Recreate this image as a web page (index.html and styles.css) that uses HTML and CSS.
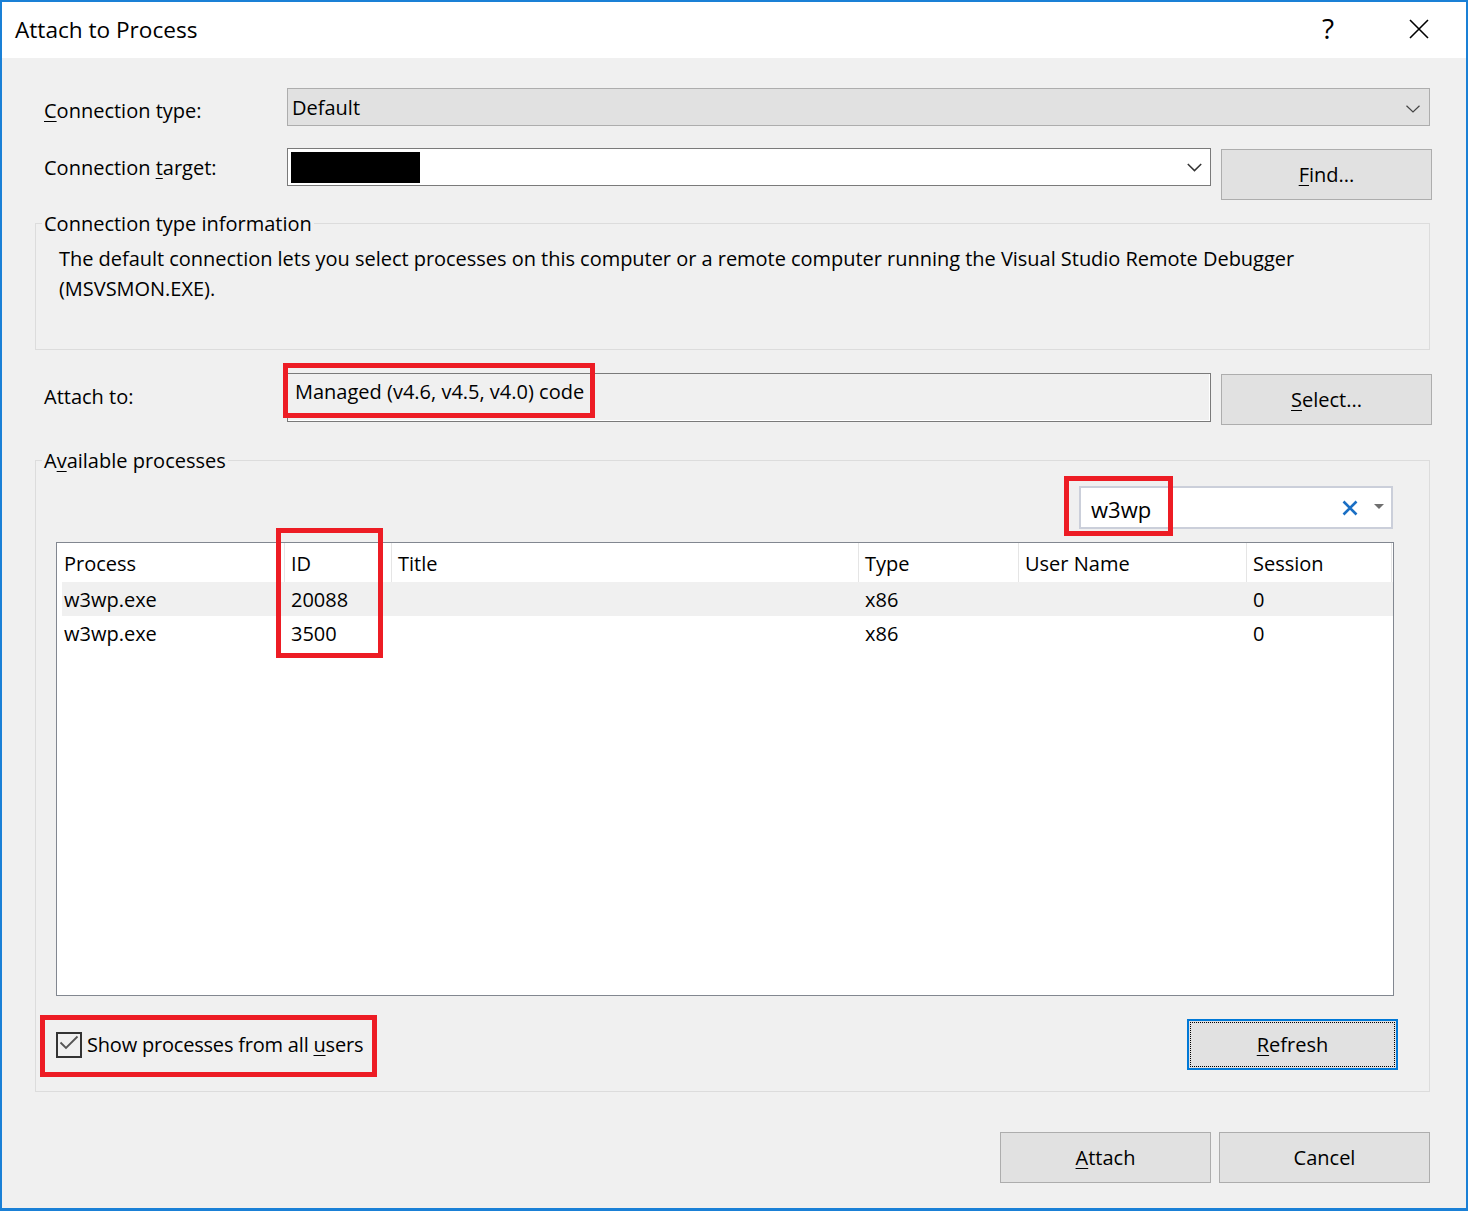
FILE: index.html
```html
<!DOCTYPE html>
<html lang="en">
<head>
<meta charset="utf-8">
<title>Attach to Process</title>
<link rel="stylesheet" href="styles.css">
</head>
<body>
<div class="window">
  <div class="titlebar">
    <span class="title">Attach to Process</span>
    <span class="help">?</span>
    <svg class="close" width="20" height="20" viewBox="0 0 20 20"><path d="M1 1L19 19M19 1L1 19" stroke="#000" stroke-width="1.6" fill="none"/></svg>
  </div>
  <div class="content">
    <div class="row row-type">
      <label class="lbl"><u>C</u>onnection type:</label>
      <div class="select">
        <span>Default</span>
        <svg class="chev" width="14" height="8" viewBox="0 0 14 8"><path d="M0.5 0.8L7 7L13.5 0.8" stroke="#444" stroke-width="1.2" fill="none"/></svg>
      </div>
    </div>
    <div class="row row-target">
      <label class="lbl">Connection <u>t</u>arget:</label>
      <div class="combo">
        <span class="redact"></span>
        <svg class="chev" width="15" height="9" viewBox="0 0 15 9"><path d="M0.8 1L7.5 7.6L14.2 1" stroke="#333" stroke-width="1.5" fill="none"/></svg>
      </div>
      <button class="btn"><u>F</u>ind...</button>
    </div>
    <div class="group info-group">
      <div class="group-title">Connection type information</div>
      <p class="info">The default connection lets you select processes on this computer or a remote computer running the Visual Studio Remote Debugger<br>(MSVSMON.EXE).</p>
    </div>
    <div class="row row-attach">
      <label class="lbl">Attach to:</label>
      <div class="readonly">
        <span>Managed (v4.6, v4.5, v4.0) code</span>
        <span class="mark mark-managed"></span>
      </div>
      <button class="btn"><u>S</u>elect...</button>
    </div>
    <div class="group procs">
      <div class="group-title">A<u>v</u>ailable processes</div>
      <div class="search">
        <span class="search-text">w3wp</span>
        <svg class="search-x" width="16" height="16" viewBox="0 0 16 16"><path d="M1.5 1.5L14.5 14.5M14.5 1.5L1.5 14.5" stroke="#1a6fc4" stroke-width="2.6" fill="none"/></svg>
        <svg class="search-drop" width="10" height="5" viewBox="0 0 10 5"><path d="M0 0H10L5 5Z" fill="#6f6f6f"/></svg>
        <span class="mark mark-search"></span>
      </div>
      <div class="table">
        <div class="thead">
          <div class="th">Process</div>
          <div class="th">ID</div>
          <div class="th">Title</div>
          <div class="th">Type</div>
          <div class="th">User Name</div>
          <div class="th">Session</div>
        </div>
        <div class="tr sel">
          <div class="td">w3wp.exe</div>
          <div class="td">20088</div>
          <div class="td"></div>
          <div class="td">x86</div>
          <div class="td"></div>
          <div class="td">0</div>
        </div>
        <div class="tr">
          <div class="td">w3wp.exe</div>
          <div class="td">3500</div>
          <div class="td"></div>
          <div class="td">x86</div>
          <div class="td"></div>
          <div class="td">0</div>
        </div>
        <span class="mark mark-id"></span>
      </div>
      <div class="bottom-row">
        <label class="check">
          <span class="box"><svg width="22" height="22" viewBox="0 0 22 22"><path d="M2.5 8.5L8 14L19.5 2.5" stroke="#555" stroke-width="1.8" fill="none"/></svg></span>
          <span class="check-text">Show processes from all <u>u</u>sers</span>
        </label>
        <button class="btn focus"><u>R</u>efresh</button>
        <span class="mark mark-check"></span>
      </div>
    </div>
    <div class="footer">
      <button class="btn"><u>A</u>ttach</button>
      <button class="btn">Cancel</button>
    </div>
  </div>
</div>
</body>
</html>
```

FILE: styles.css
```css
* {
  box-sizing: border-box;
}

body {
  margin: 0;
  font-family: "Open Sans", "Segoe UI", sans-serif;
  font-size: 20px;
  color: #000;
  background: #fff;
}

u {
  text-decoration-thickness: 1px;
  text-underline-offset: 3px;
}

.window {
  width: 1468px;
  height: 1211px;
  border: 2px solid #1a80d6;
  border-bottom-width: 3px;
  background: #f0f0f0;
  display: flex;
  flex-direction: column;
}

/* title bar */
.titlebar {
  height: 56px;
  flex: none;
  background: #fff;
  display: flex;
  align-items: flex-start;
  padding-left: 13px;
}

.title {
  font-size: 22.6px;
  line-height: 56px;
}

.help {
  margin-left: auto;
  font-size: 28px;
  line-height: 52px;
}

.close {
  margin: 17px 37px 0 75px;
}

/* content */
.content {
  padding: 30px 36px 0 33px;
  display: flex;
  flex-direction: column;
}

.row {
  display: flex;
  align-items: flex-start;
  padding-left: 9px;
}

.lbl {
  width: 243px;
  flex: none;
  line-height: 30px;
}

.row-type .lbl { padding-top: 8px; }
.row-target { margin-top: 22px; gap: 10px; }
.row-target .lbl { padding-top: 5px; margin-right: -10px; }
.row-attach { margin-top: 23px; gap: 10px; }
.row-attach .lbl { padding-top: 9px; margin-right: -10px; }

.select {
  flex: 1;
  height: 38px;
  background: #e1e1e1;
  border: 1px solid #adadad;
  display: flex;
  align-items: flex-start;
  padding: 4px 9px 0 4px;
  line-height: 30px;
}

.chev {
  margin-left: auto;
  align-self: center;
}

.combo {
  flex: 1;
  height: 38px;
  background: #fff;
  border: 1px solid #7a7a7a;
  display: flex;
  align-items: center;
  padding: 0 8px 0 3px;
}

.redact {
  width: 129px;
  height: 31px;
  background: #000;
}

.btn {
  flex: none;
  width: 211px;
  height: 51px;
  background: #e1e1e1;
  border: 1px solid #adadad;
  font: inherit;
  color: #000;
  line-height: 49px;
  padding: 0;
  text-align: center;
}

.row-target .btn,
.row-attach .btn {
  margin-top: 1px;
  margin-right: -2px;
}

.readonly {
  flex: 1;
  height: 49px;
  border: 1px solid #7a7a7a;
  box-shadow: inset -1px -1px 0 #fff;
  position: relative;
  line-height: 30px;
  padding: 3px 0 0 7px;
}

/* group boxes */
.group {
  border: 1px solid #dcdcdc;
  display: flex;
  flex-direction: column;
  align-items: flex-start;
}

.group-title {
  margin: -15px 0 0 6px;
  padding: 0 2px;
  background: #f0f0f0;
  line-height: 30px;
}

.info-group {
  margin-top: 23px;
  padding-bottom: 45px;
}

.info {
  margin: 5px 0 0 23px;
  line-height: 30px;
  white-space: nowrap;
  letter-spacing: -0.03px;
}

.procs {
  margin-top: 35px;
  padding-bottom: 21px;
  align-items: stretch;
}

.procs .group-title {
  align-self: flex-start;
}

.search {
  align-self: flex-end;
  margin: 10px 36px 0 0;
  width: 314px;
  height: 43px;
  background: #fff;
  border: 2px solid #cbcfda;
  display: flex;
  align-items: center;
  padding: 2px 7px 0 10px;
  position: relative;
  font-size: 22px;
  line-height: 30px;
}

.search-x {
  margin-left: auto;
  margin-top: -2px;
}

.search-drop {
  margin-left: 16px;
  margin-top: -4px;
}

/* list view */
.table {
  margin: 13px 35px 0 20px;
  height: 454px;
  border: 1px solid #828790;
  background: #fff;
  position: relative;
}

.thead {
  display: grid;
  grid-template-columns: 228px 107px 467px 160px 228px 145px;
  height: 39px;
}

.th {
  border-right: 1px solid #e5e5e5;
  padding: 2px 0 0 6px;
  line-height: 37px;
}

.th:first-child {
  padding-left: 7px;
}

.tr {
  display: grid;
  grid-template-columns: 223px 107px 467px 160px 228px 145px;
  margin-left: 5px;
  height: 34px;
  padding-top: 2px;
  line-height: 32px;
}

.tr.sel {
  background: #f0f0f0;
}

.td {
  padding-left: 6px;
  white-space: nowrap;
}

.td:first-child {
  padding-left: 2px;
}

.bottom-row {
  display: flex;
  align-items: center;
  margin: 23px 31px 0 20px;
  height: 51px;
  position: relative;
}

.check {
  display: flex;
  align-items: center;
  gap: 5px;
  line-height: 30px;
}

.check-text {
  letter-spacing: -0.2px;
}

.box {
  width: 26px;
  height: 26px;
  border: 2px solid #333;
  display: flex;
}

.btn.focus {
  margin-left: auto;
  border: 2px solid #0078d7;
  line-height: 47px;
  position: relative;
}

.btn.focus::after {
  content: "";
  position: absolute;
  inset: 1px;
  border: 1px dotted #000;
}

.footer {
  display: flex;
  justify-content: flex-end;
  gap: 8px;
  margin-top: 40px;
}

/* red annotation frames */
.mark {
  position: absolute;
  border: 5px solid #ed1c24;
  pointer-events: none;
}

.mark-managed { left: -5px; top: -11px; width: 312px; height: 55px; }
.mark-search { left: -17px; top: -12px; width: 109px; height: 60px; }
.mark-id { left: 219px; top: -15px; width: 107px; height: 130px; }
.mark-check { left: -16px; top: -4px; width: 337px; height: 62px; }
```
